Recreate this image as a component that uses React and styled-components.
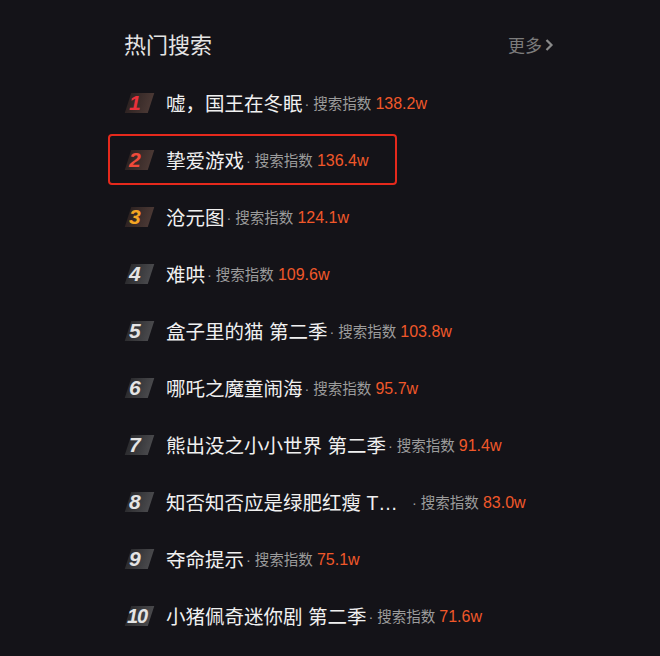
import styled, { createGlobalStyle, css } from "styled-components";

const items = [
  { title: "嘘，国王在冬眠", value: "138.2w" },
  { title: "挚爱游戏", value: "136.4w", marked: true },
  { title: "沧元图", value: "124.1w" },
  { title: "难哄", value: "109.6w" },
  { title: "盒子里的猫 第二季", value: "103.8w" },
  { title: "哪吒之魔童闹海", value: "95.7w" },
  { title: "熊出没之小小世界 第二季", value: "91.4w" },
  { title: "知否知否应是绿肥红瘦 TV版", value: "83.0w" },
  { title: "夺命提示", value: "75.1w" },
  { title: "小猪佩奇迷你剧 第二季", value: "71.6w" },
];

const rankColors = ["#e8313b", "#f04a3a", "#f5a623"];

function App() {
  return (
    <>
      <GlobalStyle />
      <Page>
        <Header>
          <Title>热门搜索</Title>
          <More>
            更多
            <svg width="10" height="14" viewBox="0 0 10 14">
              <path d="M2.5 2 L7.5 7 L2.5 12" fill="none" stroke="#8a8a8a" strokeWidth="2.2" />
            </svg>
          </More>
        </Header>
        <List>
          {items.map((item, i) => (
            <Row key={item.title} $marked={item.marked}>
              <Badge $top={i < 3}>
                <Rank $color={rankColors[i] || "#e4e4e4"} $wide={i >= 9}>
                  {i + 1}
                </Rank>
              </Badge>
              <Name>{item.title}</Name>
              <Stat>
                · 搜索指数 <Value>{item.value}</Value>
              </Stat>
            </Row>
          ))}
        </List>
      </Page>
    </>
  );
}

const GlobalStyle = createGlobalStyle`
  html, body {
    margin: 0;
    background: #141318;
  }
  body {
    font-family: "Liberation Sans", "Noto Sans CJK SC", sans-serif;
  }
`;

const Page = styled.div`
  width: 660px;
  height: 656px;
  box-sizing: border-box;
  padding: 24px 0 0 124px;
  background: #141318;
  overflow: hidden;
`;

const Header = styled.div`
  width: 430px;
  height: 38px;
  display: flex;
  align-items: center;
  justify-content: space-between;
`;

const Title = styled.h2`
  margin: 0;
  font-size: 22px;
  font-weight: 400;
  color: #e4e4e4;
`;

const More = styled.div`
  display: flex;
  align-items: center;
  gap: 2px;
  font-size: 17px;
  color: #7c7c7c;
  margin-top: 3px;
  svg {
    margin-top: 1px;
  }
`;

const List = styled.div`
  margin-top: 12px;
  display: flex;
  flex-direction: column;
  align-items: flex-start;
`;

const Row = styled.div`
  position: relative;
  height: 57px;
  display: flex;
  align-items: center;
  ${(p) =>
    p.$marked &&
    css`
      &::after {
        content: "";
        position: absolute;
        left: -16px;
        right: -28px;
        top: 3px;
        bottom: 3px;
        border: 2px solid #e5291c;
        border-radius: 4px;
        pointer-events: none;
      }
    `}
`;

const Badge = styled.div`
  position: relative;
  width: 26px;
  height: 20px;
  margin-left: 2px;
  margin-right: 14px;
  display: flex;
  align-items: center;
  &::before {
    content: "";
    position: absolute;
    left: 2px;
    top: 0;
    width: 23px;
    height: 20px;
    transform: skewX(-18deg);
    background: ${(p) =>
      p.$top
        ? "linear-gradient(90deg, #2e2322, #4a3834)"
        : "linear-gradient(90deg, #2c2c2f, #49494c)"};
  }
`;

const Rank = styled.span`
  position: relative;
  z-index: 1;
  margin-left: ${(p) => (p.$wide ? "1px" : "3px")};
  font-size: ${(p) => (p.$wide ? "20px" : "21px")};
  font-weight: 700;
  font-style: italic;
  letter-spacing: ${(p) => (p.$wide ? "-1px" : "0")};
  color: ${(p) => p.$color};
  line-height: 1;
`;

const Name = styled.span`
  max-width: 244px;
  white-space: nowrap;
  overflow: hidden;
  text-overflow: ellipsis;
  font-size: 19.5px;
  color: #f0f0f0;
`;

const Stat = styled.span`
  margin-left: 2px;
  font-size: 14.5px;
  color: #9c9c9c;
  white-space: nowrap;
`;

const Value = styled.span`
  font-size: 16px;
  color: #f0582a;
`;

export default App;
